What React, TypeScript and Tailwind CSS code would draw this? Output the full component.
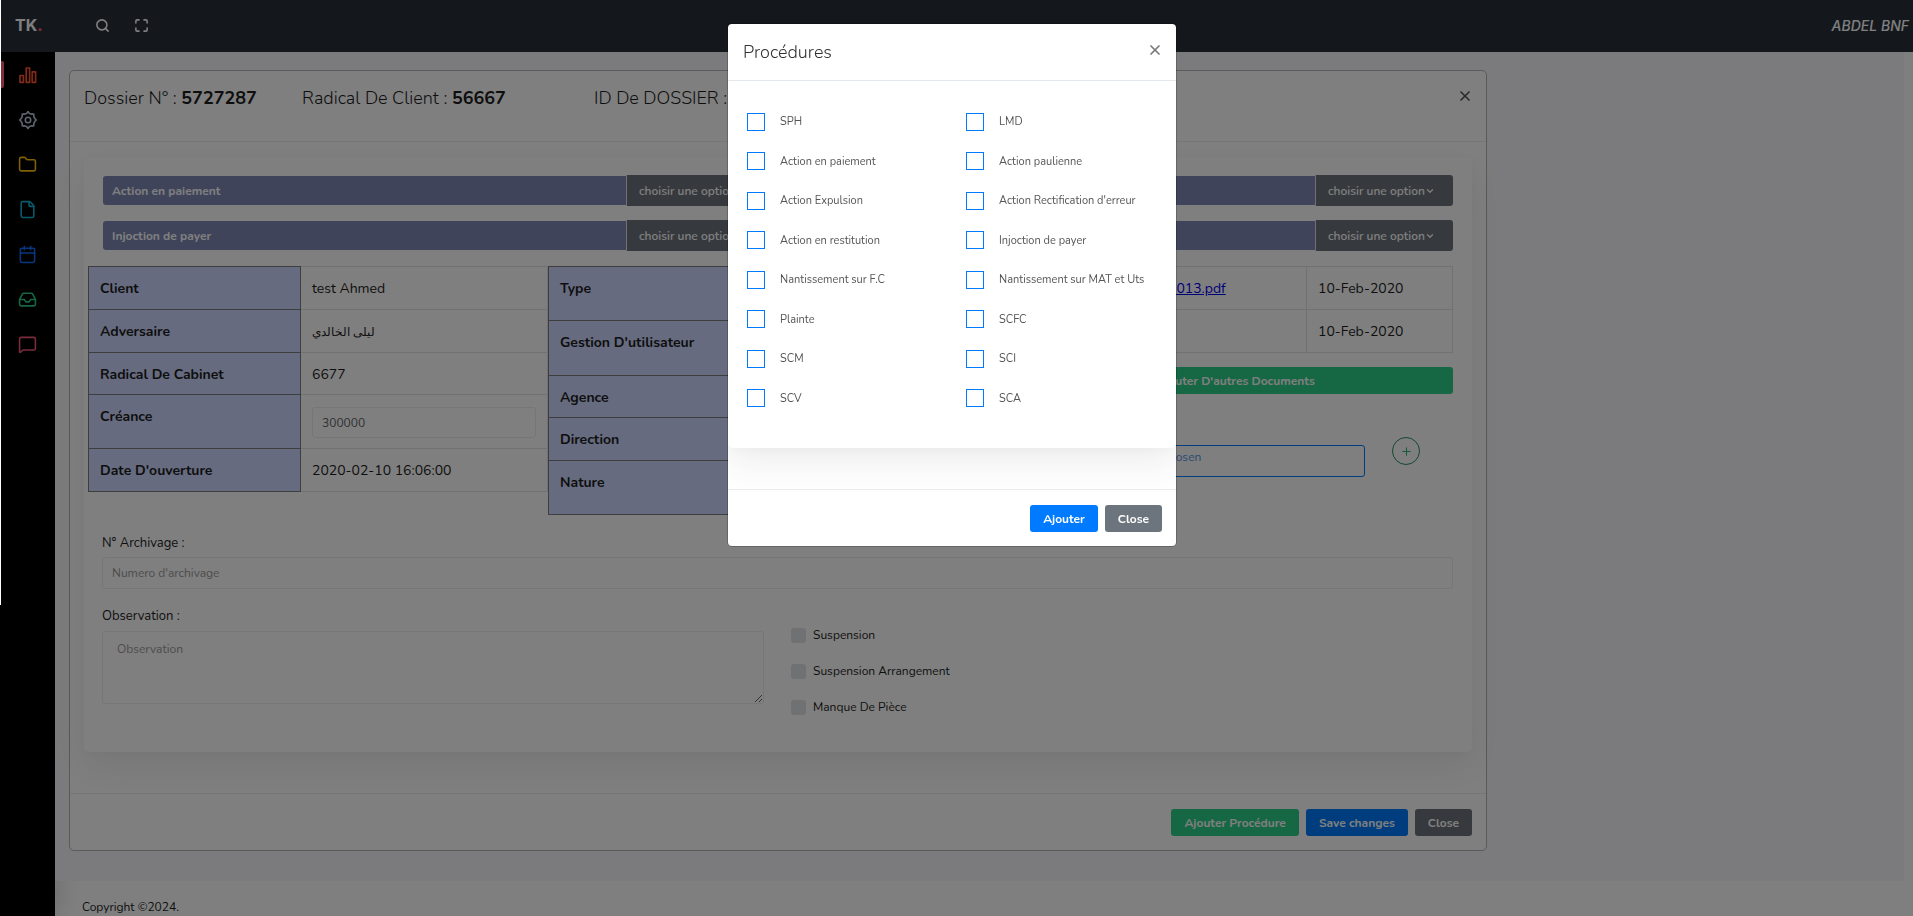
import React, { useState } from "react";
import { Search, Maximize, Settings, Folder, File, Calendar, Inbox, MessageSquare, X, Plus, ChevronDown } from "lucide-react";

const procedures = [
  "SPH", "LMD",
  "Action en paiement", "Action paulienne",
  "Action Expulsion", "Action Rectification d'erreur",
  "Action en restitution", "Injoction de payer",
  "Nantissement sur F.C", "Nantissement sur MAT et Uts",
  "Plainte", "SCFC",
  "SCM", "SCI",
  "SCV", "SCA",
];

const navItems = [
  { label: "Dossiers", icon: Folder, color: "text-[#ffc107]" },
  { label: "Documents", icon: File, color: "text-[#11b5d8]" },
  { label: "Calendrier", icon: Calendar, color: "text-[#0d6efd]" },
  { label: "Courrier", icon: Inbox, color: "text-[#2dce89]" },
  { label: "Messages", icon: MessageSquare, color: "text-[#f5587b]" },
];

function BarsIcon() {
  return (
    <svg width="18" height="18" viewBox="0 0 18 18" fill="none" stroke="currentColor" strokeWidth="1.7" strokeLinejoin="round">
      <rect x="1" y="9.5" width="3.4" height="6.8" />
      <rect x="7.2" y="2" width="3.4" height="14.3" />
      <rect x="13.2" y="5.8" width="3.4" height="10.5" />
    </svg>
  );
}

function GearIcon() {
  return (
    <svg width="20" height="20" viewBox="0 0 20 20" fill="none" stroke="currentColor" strokeWidth="1.6" strokeLinejoin="round">
      <path d="M8.6 3.4 L10 1.6 L11.4 3.4 L13.2 4.1 L15.7 4.1 L15.9 6.6 L16.6 8.4 L18.4 10 L16.6 11.6 L15.9 13.4 L15.7 15.9 L13.2 15.9 L11.4 16.6 L10 18.4 L8.6 16.6 L6.8 15.9 L4.3 15.9 L4.1 13.4 L3.4 11.6 L1.6 10 L3.4 8.4 L4.1 6.6 L4.3 4.1 L6.8 4.1 Z" />
      <circle cx="10" cy="10" r="2.7" />
    </svg>
  );
}

function Sidebar() {
  return (
    <nav className="flex w-[55px] shrink-0 flex-col bg-black shadow-[0_0_28px_rgba(0,0,0,0.18)]" aria-label="Navigation">
      <a href="#stats" aria-label="Statistiques" className="relative flex h-[45px] items-center justify-center text-[#ff5630]">
        <span className="absolute left-0 h-[27px] w-1 rounded-r-[2px] bg-[#ff5c75]" />
        <BarsIcon />
      </a>
      <a href="#settings" aria-label="Paramètres" className="flex h-[45px] items-center justify-center text-[#bfc8e0]">
        <GearIcon />
      </a>
      {navItems.map(({ label, icon: Icon, color }) => (
        <a key={label} href="#nav" aria-label={label} className={"flex h-[45px] items-center justify-center " + color}>
          <Icon size={19} />
        </a>
      ))}
    </nav>
  );
}

function Btn({ className = "", onClick, children }: { className?: string; onClick?: () => void; children: React.ReactNode }) {
  return (
    <button type="button" onClick={onClick} className={"h-[27px] rounded-[3px] px-[13px] pt-px text-[12px] font-bold text-white " + className}>
      {children}
    </button>
  );
}

function ProcedureRow({ name }: { name?: string }) {
  return (
    <div className="flex h-[31px] items-center">
      <div className="flex h-[29px] grow items-center rounded-l-[3px] bg-[#8088b4] px-[9px] text-[12px] font-bold text-white">{name}</div>
      <button type="button" className="flex h-[31px] w-[138px] items-center rounded-r-[3px] border-l border-[#dee2e6] bg-[#6c757d] pl-3 text-[12px] font-semibold text-white">
        choisir une option
        <ChevronDown size={10} strokeWidth={3} />
      </button>
    </div>
  );
}

const th = "border border-[#7c7c7c] bg-[#ccd7ff] px-[11px] pt-3 text-left align-top text-[14px] leading-5 font-bold";
const td = "border border-[#dee2e6] px-[11px] pt-3 align-top text-[14px] leading-5";

function DossierTables() {
  return (
    <div className="mt-[15px] flex items-start pr-[19px] pl-1">
      <table className="w-[460px] shrink-0 border-collapse">
        <tbody>
          <tr className="h-[43px]"><th className={th + " w-[212px]"}>Client</th><td className={td}>test Ahmed</td></tr>
          <tr className="h-[43px]"><th className={th}>Adversaire</th><td className={td}><span className="text-[12px]">ليلى الخالدي</span></td></tr>
          <tr className="h-[42px]"><th className={th}>Radical De Cabinet</th><td className={td}>6677</td></tr>
          <tr className="h-[54px]">
            <th className={th}><label htmlFor="creance">Créance</label></th>
            <td className={td}>
              <input id="creance" defaultValue="300000" className="block h-[31px] w-full rounded-[3px] border border-[#e9ecef] px-[9px] text-[12px] text-[#5c6066]" />
            </td>
          </tr>
          <tr className="h-[43px]"><th className={th}>Date D'ouverture</th><td className={td}>2020-02-10 16:06:00</td></tr>
        </tbody>
      </table>
      <table className="w-[455px] shrink-0 border-collapse">
        <tbody>
          <tr className="h-[54px]"><th className={th + " w-[212px]"}>Type</th><td className={td} /></tr>
          <tr className="h-[55px]"><th className={th}>Gestion D'utilisateur</th><td className={td} /></tr>
          <tr className="h-[42px]"><th className={th}>Agence</th><td className={td} /></tr>
          <tr className="h-[43px]"><th className={th}>Direction</th><td className={td} /></tr>
          <tr className="h-[54px]"><th className={th}>Nature</th><td className={td} /></tr>
        </tbody>
      </table>
      <div className="ml-[15px] grow">
        <table className="w-full border-collapse">
          <tbody>
            <tr className="h-[43px]">
              <td className={td + " pl-[149px]"}><a href="#pdf" className="text-[#0000ee] underline">2013.pdf</a></td>
              <td className={td + " w-[146px]"}>10-Feb-2020</td>
            </tr>
            <tr className="h-[43px]"><td className={td} /><td className={td}>10-Feb-2020</td></tr>
          </tbody>
        </table>
        <Btn className="mt-[14px] w-full bg-[#2dce89]">Ajouter D'autres Documents</Btn>
        <div className="mt-[43px] flex items-start justify-between pr-[33px] pl-4">
          <div className="mt-2 h-8 w-[331px] rounded-[3px] border border-[#007bff] pt-0.5 pl-[90px] text-[12px] leading-[18px] text-[#5590e8]">No file chosen</div>
          <button type="button" aria-label="Ajouter un fichier" className="flex size-7 items-center justify-center rounded-full border border-[#26915f] text-[#2db37a]">
            <Plus size={13} strokeWidth={2} />
          </button>
        </div>
      </div>
    </div>
  );
}

function DossierCard() {
  return (
    <section className="flex w-full max-w-[1418px] flex-col rounded-[5px] border border-[#b4b4b4] bg-white">
      <header className="flex h-[71px] items-start border-b border-[#e9ecef] pt-[15px] pr-[13px] pl-[14px] text-[18px] leading-6 font-light">
        <h2 className="w-[218px]">Dossier N° : <b className="font-bold">5727287</b></h2>
        <h2 className="w-[292px]">Radical De Client : <b className="font-bold">56667</b></h2>
        <h2 className="grow">ID De DOSSIER : <b className="font-bold">1</b></h2>
        <button type="button" aria-label="Fermer" className="mt-0.5 text-[#555]"><X size={16} strokeWidth={2.5} /></button>
      </header>
      <div className="px-[14px] pt-[15px] pb-[41px]">
        <div className="h-[595px] rounded-[5px] pt-[18px] shadow-[0_15px_35px_rgba(50,50,50,0.09),0_3px_10px_rgba(0,0,0,0.02)]">
          <div className="grid grid-cols-2 gap-x-7 gap-y-[14px] px-[19px]">
            <ProcedureRow name="Action en paiement" />
            <ProcedureRow />
            <ProcedureRow name="Injoction de payer" />
            <ProcedureRow />
          </div>
          <DossierTables />
          <div className="pt-[20px] pr-[19px] pl-[18px] text-[13px] leading-4">
            <label htmlFor="archive" className="block">N° Archivage :</label>
            <input id="archive" placeholder="Numero d'archivage" className="mt-[6px] block h-8 w-full rounded-[3px] border border-[#e9ecef] px-[9px] pb-px text-[12px] placeholder:text-[#999]" />
            <div className="mt-[19px] grid grid-cols-2 gap-x-[27px]">
              <div>
                <label htmlFor="obs" className="block">Observation :</label>
                <textarea id="obs" placeholder="Observation" className="mt-[7px] block h-[73px] w-full rounded-[3px] border border-[#e9ecef] px-[14px] py-[9px] text-[12px] placeholder:text-[#999]" />
              </div>
              <div className="flex flex-col gap-5 pt-[19px]">
                {["Suspension", "Suspension Arrangement", "Manque De Pièce"].map((t) => (
                  <label key={t} className="flex items-center gap-[7px] text-[12px]">
                    <input type="checkbox" className="size-[15px] appearance-none rounded-[3px] bg-[#dee2e6] checked:bg-[#007bff]" />
                    {t}
                  </label>
                ))}
              </div>
            </div>
          </div>
        </div>
      </div>
      <footer className="flex h-[57px] items-center justify-end gap-[7px] border-t border-[#e9ecef] px-[14px]">
        <Btn className="bg-[#2dce89]">Ajouter Procédure</Btn>
        <Btn className="bg-[#007bff]">Save changes</Btn>
        <Btn className="bg-[#6c757d]">Close</Btn>
      </footer>
    </section>
  );
}

function ProceduresDialog({ onClose }: { onClose: () => void }) {
  return (
    <div role="dialog" aria-label="Procédures" className="w-[448px] overflow-hidden rounded-[4px] bg-white ring-1 ring-black/20">
      <header className="flex h-[57px] items-start justify-between border-b border-[#e3e8ee] pt-4 pr-[13px] pl-[15px]">
        <h2 className="text-[18px] leading-6 font-light text-[#333]">Procédures</h2>
        <button type="button" onClick={onClose} aria-label="Fermer" className="mt-0.5 text-[#777]"><X size={16} strokeWidth={2.5} /></button>
      </header>
      <div className="h-[408px] overflow-hidden">
        <div className="h-[367px] rounded-[5px] pt-[21px] pl-[19px] shadow-[0_15px_35px_rgba(50,50,50,0.09),0_3px_10px_rgba(0,0,0,0.02)]">
          <div className="grid grid-cols-[219px_1fr]">
            {procedures.map((name) => (
              <label key={name} className="flex h-10 items-center gap-[15px] text-[11px] text-[#555] nth-[4n+1]:h-[39px] nth-[4n+2]:h-[39px]">
                <input type="checkbox" className="size-[18px] appearance-none border border-[#007bff] checked:bg-[#007bff]" />
                <span className="pt-0.5">{name}</span>
              </label>
            ))}
          </div>
        </div>
      </div>
      <footer className="flex h-[57px] items-center justify-end gap-[7px] border-t border-[#e9ecef] px-[14px]">
        <Btn className="bg-[#007bff]">Ajouter</Btn>
        <Btn className="bg-[#6c757d]" onClick={onClose}>Close</Btn>
      </footer>
    </div>
  );
}

export default function App() {
  const [open, setOpen] = useState(true);
  return (
    <div className="flex h-screen flex-col overflow-hidden bg-white font-['Nunito','Lato','Noto_Sans',sans-serif] text-[#1d1d1d]">
      <header className="flex h-[52px] shrink-0 items-center bg-[#28303a] pb-0.5 text-white">
        <div className="w-[55px] pl-[15px] font-['Inter',sans-serif] text-[16px] font-bold">TK<span className="text-[#ff5c75]">.</span></div>
        <button type="button" aria-label="Rechercher" className="ml-10"><Search size={15} strokeWidth={2.5} /></button>
        <button type="button" aria-label="Plein écran" className="ml-6"><Maximize size={15} strokeWidth={2.5} /></button>
        <span className="mr-1 ml-auto font-['Inter',sans-serif] text-[14px] font-medium italic">ABDEL BNF</span>
      </header>
      <div className="flex grow overflow-hidden">
        <Sidebar />
        <main className="flex grow flex-col">
          <div className="mr-[9px] bg-[#f7f7fa] pt-[18px] pb-[30px] pl-[14px]">
            <DossierCard />
          </div>
          <footer className="px-[27px] pt-[18px] text-[12px] leading-4">Copyright ©2024.</footer>
        </main>
      </div>
      {open && (
        <div className="fixed inset-0 z-10 flex items-start justify-center bg-black/50 pt-6 pr-[9px]">
          <ProceduresDialog onClose={() => setOpen(false)} />
        </div>
      )}
      <div className="fixed top-0 left-0 z-20 h-[605px] w-px bg-white" />
    </div>
  );
}
